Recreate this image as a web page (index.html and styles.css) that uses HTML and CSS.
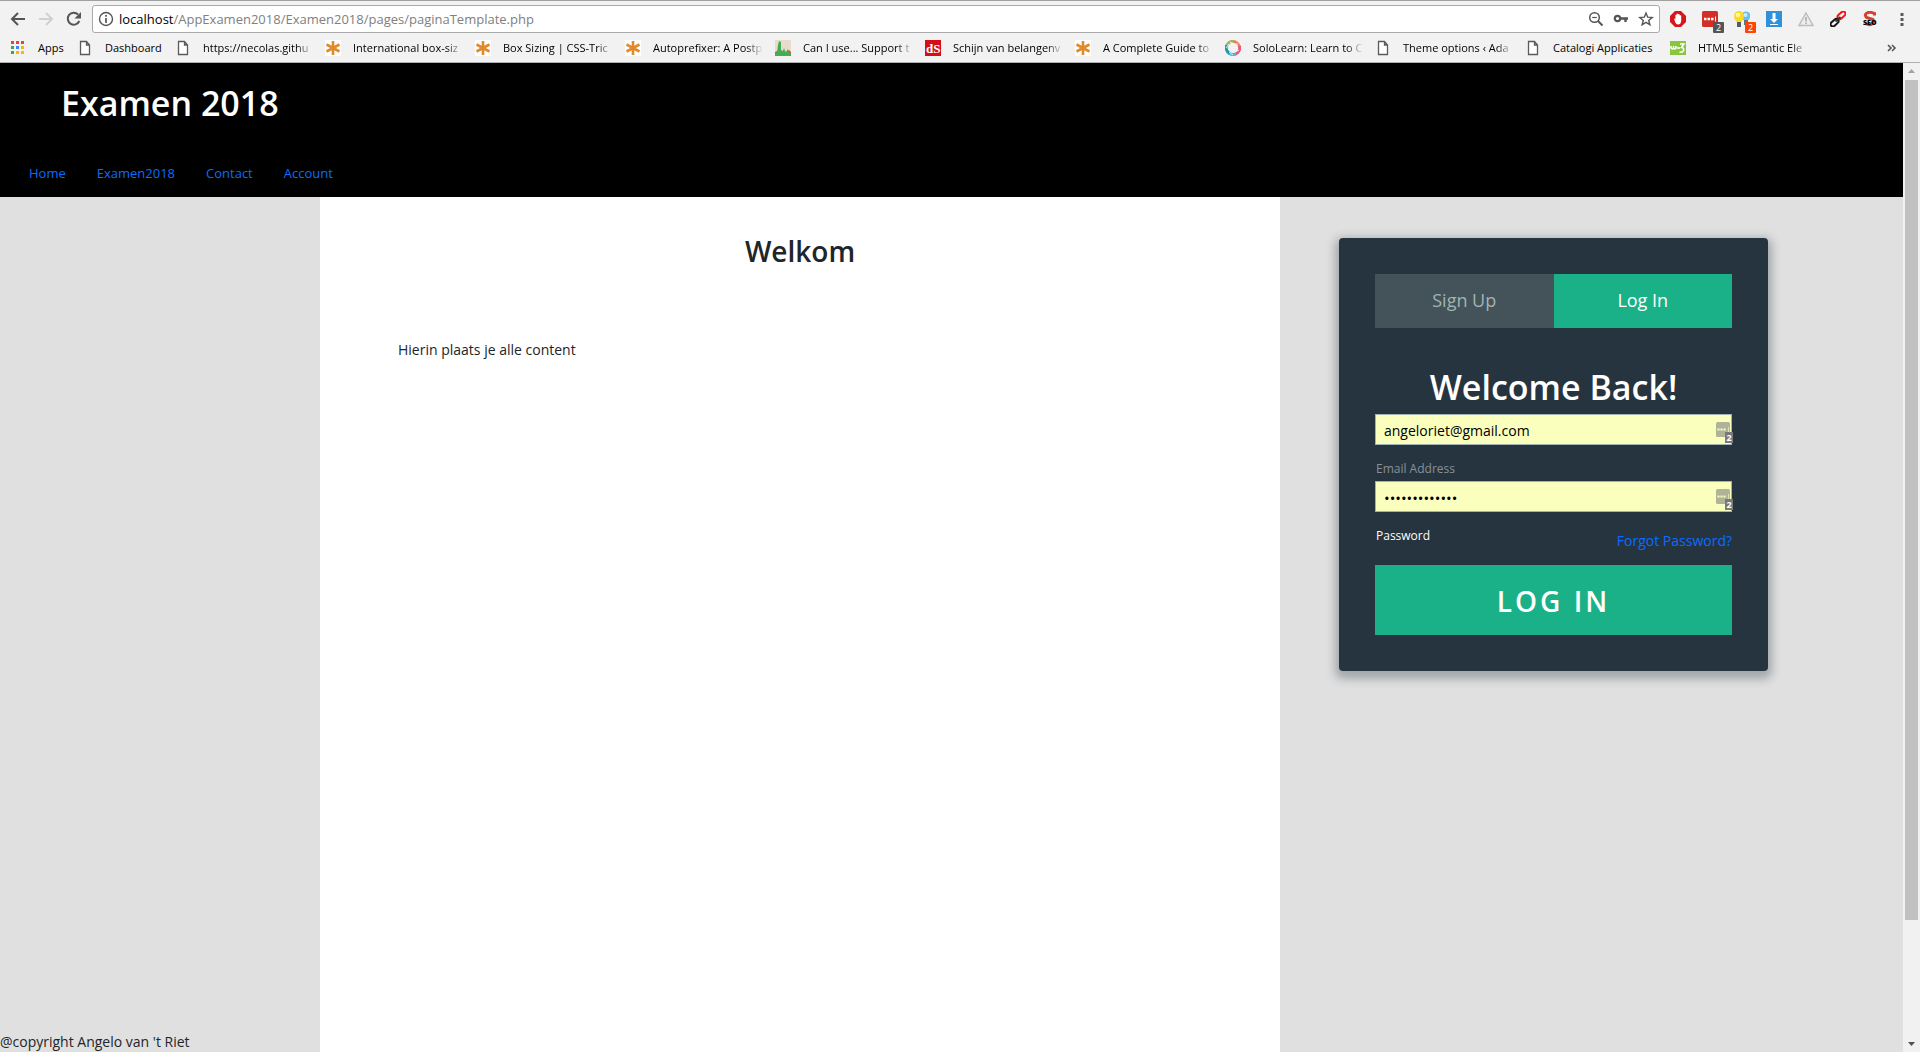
FILE: index.html
```html
<!DOCTYPE html>
<html lang="nl">
<head>
<meta charset="utf-8">
<title>Examen 2018</title>
<link rel="stylesheet" href="styles.css">
</head>
<body>
<svg class="sprite" aria-hidden="true">
  <symbol id="file" viewBox="0 0 16 16"><path d="M3.500 1.500h6l3 3.500v9.500h-9zM9.500 1.500v3.500h3" fill="#fff" stroke="#5a5a5a" stroke-width="1.300"/></symbol>
  <symbol id="star" viewBox="0 0 16 16"><path fill="#fff" d="M0 0h16v16H0z"/><path d="M8 1v14M1.500 4.500l13 7M14.500 4.500l-13 7" stroke="#e08a2c" stroke-width="2.600"/></symbol>
  <symbol id="lastpass" viewBox="0 0 14 15"><rect width="14" height="15" rx="1.500" fill="#b1b398"/><path d="M1.500 7.500h2m1 0h2m1 0h2" stroke="#fcffc5" stroke-width="2.200"/><path d="M12.500 5v5" stroke="#dfe2b4"/></symbol>
</svg>

<header class="browser">
  <div class="toolbar">
    <div class="nav-buttons">
      <button class="icon-button" aria-label="Back"><svg viewBox="0 0 16 16"><path d="M15 8H2.500M8 2L2 8l6 6" fill="none" stroke="#555" stroke-width="2"/></svg></button>
      <button class="icon-button" aria-label="Forward"><svg viewBox="0 0 16 16"><path d="M1 8h12.500M8 2l6 6-6 6" fill="none" stroke="#d0d0d0" stroke-width="2"/></svg></button>
      <button class="icon-button" aria-label="Reload"><svg viewBox="0 0 16 16"><path d="M13.300 10a6 6 0 1 1-1.200-6.500" fill="none" stroke="#555" stroke-width="2"/><path d="M15 1v6.500H8.500z" fill="#555"/></svg></button>
    </div>
    <div class="address">
      <svg class="icon" viewBox="0 0 16 16"><circle cx="8" cy="8" r="6.500" fill="none" stroke="#555" stroke-width="1.400"/><path d="M8 7v5M8 4v1.800" stroke="#555" stroke-width="1.700"/></svg>
      <span class="url"><span class="host">localhost</span>/AppExamen2018/Examen2018/pages/paginaTemplate.php</span>
      <div class="address-actions">
        <svg class="icon" viewBox="0 0 16 16"><circle cx="6.500" cy="6.500" r="4.800" fill="none" stroke="#555" stroke-width="1.500"/><path d="M10 10l4.500 4.500" stroke="#555" stroke-width="2"/><path d="M4.200 6.500h4.600" stroke="#555" stroke-width="1.200"/></svg>
        <svg class="icon" viewBox="0 0 16 16"><circle cx="4.500" cy="7.500" r="2.700" fill="none" stroke="#555" stroke-width="2.200"/><path d="M7.500 7.500H15M12.500 8v3" stroke="#555" stroke-width="2.400"/></svg>
        <svg class="icon" viewBox="0 0 16 16"><path d="M8 2l1.700 4.200 4.500.3-3.500 2.900 1.200 4.400L8 11.400l-3.900 2.400 1.200-4.400-3.500-2.900 4.500-.3z" fill="none" stroke="#555" stroke-width="1.400"/></svg>
      </div>
    </div>
    <div class="extensions">
      <svg class="icon" viewBox="0 0 16 16"><path d="M5 0h6l5 5v6l-5 5H5l-5-5V5z" fill="#d8141c"/><path d="M4 7.500l1.400.5V4q.8-1 1.300 0V3q.8-1 1.500 0v.5q.8-.8 1.500 0v1q.9-.7 1.500 0V10q-.5 3.500-3 3.500T5 10.800z" fill="#fff"/></svg>
      <span class="extension"><svg class="icon" viewBox="0 0 16 16"><rect width="16" height="16" rx="1.500" fill="#d32d27"/><path d="M2 8h2.500m1 0H8m1 0h2.500" stroke="#fff" stroke-width="2.500"/><path d="M13.500 5.500v5" stroke="#fff"/></svg><span class="badge">2</span></span>
      <span class="extension"><svg class="icon" viewBox="0 0 16 16"><circle cx="12" cy="5" r="4.500" fill="#69bfe9"/><circle cx="11.500" cy="4" r="2" fill="#c6edfb"/><path d="M10 9h4v5h-4z" fill="#65737c"/><path d="M0 5a5 5 0 0 1 10 0q0 3-2.500 6h-5Q0 8 0 5z" fill="#ffd91b"/><circle cx="4" cy="4" r="2.300" fill="#fff9b0"/><path d="M3 11h4v5H3z" fill="#4f5d66"/></svg><span class="badge badge-orange">2</span></span>
      <svg class="icon" viewBox="0 0 16 16"><path fill="#2f91dc" d="M0 0h16v16H0z"/><path d="M6.500 2h3v6H12l-4 4-4-4h2.500zM4 13h8v1H4z" fill="#fff"/></svg>
      <svg class="icon" viewBox="0 0 16 16"><path d="M8 2l7 12.500H1z" fill="#eee" stroke="#bdbdbd" stroke-width="1.500"/><path d="M8 6v4.500M8 11.500V13" stroke="#aaa" stroke-width="1.600"/></svg>
      <svg class="icon" viewBox="0 0 16 16"><rect x="7" y="2" width="9" height="4.500" rx="2.200" transform="rotate(-42 11.500 4.200)" fill="none" stroke="#f01414" stroke-width="2"/><rect x="0" y="9.500" width="9" height="4.500" rx="2.200" transform="rotate(-42 4.500 11.700)" fill="none" stroke="#151515" stroke-width="2"/><path d="M5.500 10.500l5-4.500" stroke="#333" stroke-width="1.800"/></svg>
      <svg class="icon" viewBox="0 0 16 16"><path d="M12.500 4.500V2.500Q8 .500 5 2T4.500 6.500L11 8.500q1.500 3-1 4.500T3.500 12.500" fill="none" stroke="#d5402f" stroke-width="3"/><text x="1" y="14" font-size="7" font-weight="800">SEO</text></svg>
      <button class="icon-button" aria-label="Menu"><svg viewBox="0 0 16 16"><path d="M6.500 2h3v3h-3zm0 5h3v3h-3zm0 5h3v3h-3z" fill="#5a5a5a"/></svg></button>
    </div>
  </div>
  <nav class="bookmarks" aria-label="Bookmarks">
    <a class="bookmark bookmark-short" href="#"><svg class="icon" viewBox="0 0 16 16"><path d="M1 1h3v3H1zm5 0h3v3H6zm5 0h3v3h-3z" fill="#ea4335"/><path d="M1 6h3v3H1zM1 11h3v3H1z" fill="#34a853"/><path d="M6 6h3v3H6z" fill="#4285f4"/><path d="M11 6h3v3h-3zM6 11h3v3H6zm5 0h3v3h-3z" fill="#f9b50b"/></svg><span class="bookmark-label">Apps</span></a>
    <a class="bookmark bookmark-medium" href="#"><svg class="icon"><use href="#file"/></svg><span class="bookmark-label">Dashboard</span></a>
    <a class="bookmark bookmark-long" href="#"><svg class="icon"><use href="#file"/></svg><span class="bookmark-label">https://necolas.githu</span></a>
    <a class="bookmark bookmark-long" href="#"><svg class="icon"><use href="#star"/></svg><span class="bookmark-label">International box-siz</span></a>
    <a class="bookmark bookmark-long" href="#"><svg class="icon"><use href="#star"/></svg><span class="bookmark-label">Box Sizing | CSS-Tric</span></a>
    <a class="bookmark bookmark-long" href="#"><svg class="icon"><use href="#star"/></svg><span class="bookmark-label">Autoprefixer: A Postp</span></a>
    <a class="bookmark bookmark-long" href="#"><svg class="icon" viewBox="0 0 16 16"><path fill="#e8dccb" d="M0 0h16v16H0z"/><path fill="#d9534a" d="M0 12l4-2 6 3 4-3 2 2v2H0z"/><path fill="#42ad55" d="M0 16v-3l2-1 1-7 1-4 2 1v8l2 1 1-3 1 3 1 1 2-3 1 4h2v3z"/></svg><span class="bookmark-label">Can I use... Support t</span></a>
    <a class="bookmark bookmark-long" href="#"><svg class="icon" viewBox="0 0 16 16"><path fill="#d40f18" d="M0 0h16v16H0z"/><text class="serif-mark" x="1" y="13" font-size="13" font-weight="700" fill="#fff">dS</text></svg><span class="bookmark-label">Schijn van belangenv</span></a>
    <a class="bookmark bookmark-long" href="#"><svg class="icon"><use href="#star"/></svg><span class="bookmark-label">A Complete Guide to</span></a>
    <a class="bookmark bookmark-long" href="#"><svg class="icon" viewBox="0 0 16 16"><g fill="none" stroke-width="3"><path d="M2 5a6.500 6.500 0 0 1 7-3.500" stroke="#9cb85b"/><path d="M8 1.500A6.500 6.500 0 0 1 14.300 7" stroke="#ef8354"/><path d="M14.400 6a6.500 6.500 0 0 1-4 8" stroke="#e9587b"/><path d="M11 13.800a6.500 6.500 0 0 1-7-.8" stroke="#42b7e8"/><path d="M4.500 13.500A6.500 6.500 0 0 1 2 5" stroke="#2199a0"/></g><path d="M5 2l4 2m3-1l0 5m2 2l-4 2m-2 3l-4-3M1 8l3-4" stroke="#fff" stroke-width=".8"/></svg><span class="bookmark-label">SoloLearn: Learn to C</span></a>
    <a class="bookmark bookmark-long" href="#"><svg class="icon"><use href="#file"/></svg><span class="bookmark-label">Theme options ‹ Ada</span></a>
    <a class="bookmark bookmark-wide" href="#"><svg class="icon"><use href="#file"/></svg><span class="bookmark-label">Catalogi Applicaties</span></a>
    <a class="bookmark bookmark-long" href="#"><svg class="icon" viewBox="0 0 16 16"><path fill="#8ac53f" d="M0 1h16v14H0z"/><path d="M1 6v2q1.500 2 2.500 0V6v2q1.500 2 2.500 0V6M7 8h3M10 4h4l-2.500 3.500q3 .5 2 3T9.500 12" fill="none" stroke="#fff" stroke-width="1.600"/></svg><span class="bookmark-label">HTML5 Semantic Ele</span></a>
    <button class="more" aria-label="More bookmarks"><svg class="icon" viewBox="0 0 16 16"><path d="M4 5l3 3-3 3M8 5l3 3-3 3" fill="none" stroke="#555" stroke-width="1.600"/></svg></button>
  </nav>
</header>

<div class="viewport">
  <div class="page">
    <header class="site-header">
      <h1 class="site-title">Examen 2018</h1>
      <nav class="site-nav"><a href="#">Home</a><a href="#">Examen2018</a><a href="#">Contact</a><a href="#">Account</a></nav>
    </header>
    <div class="columns">
      <footer class="left">@copyright Angelo van 't Riet</footer>
      <main class="content">
        <h2 class="welcome">Welkom</h2>
        <p class="intro">Hierin plaats je alle content</p>
      </main>
      <aside class="right">
        <form class="card">
          <div class="tabs"><a class="tab" href="#">Sign Up</a><a class="tab tab-active" href="#">Log In</a></div>
          <h2 class="card-title">Welcome Back!</h2>
          <div class="field">
            <div class="input-wrap"><input class="input" id="email" type="email" value="angeloriet@gmail.com"><svg class="fill-icon"><use href="#lastpass"/></svg><span class="fill-count">2</span></div>
            <label class="label" for="email">Email Address</label>
          </div>
          <div class="field">
            <div class="input-wrap"><input class="input input-password" id="password" type="password" value="wachtwoord123"><svg class="fill-icon"><use href="#lastpass"/></svg><span class="fill-count">2</span></div>
            <div class="field-foot"><label class="label label-active" for="password">Password</label><a class="forgot" href="#">Forgot Password?</a></div>
          </div>
          <button class="submit" type="button">LOG IN</button>
        </form>
      </aside>
    </div>
  </div>
  <div class="scrollbar" aria-hidden="true">
    <svg class="arrow" viewBox="0 0 17 17"><path d="M5 10l3.500-4 3.500 4z" fill="#a3a3a3"/></svg>
    <div class="track"><div class="thumb"></div></div>
    <svg class="arrow" viewBox="0 0 17 17"><path d="M5 7l3.500 4L12 7z" fill="#505050"/></svg>
  </div>
</div>
</body>
</html>
```

FILE: styles.css
```css
* { box-sizing: border-box; }
body {
  margin: 0;
  min-height: 100vh;
  display: flex;
  flex-direction: column;
  font: 14px/22px "Open Sans", "Noto Sans", sans-serif;
  color: #212529;
  background: #e0e0e0;
}
a { color: #0a6cff; text-decoration: none; }
button { border: 0; padding: 0; background: none; font: inherit; }
h1, h2, p { margin: 0; }
.sprite { position: absolute; width: 0; height: 0; }
.icon { flex: none; display: block; width: 16px; height: 16px; }

/* Browser bars */
.browser { background: #f2f2f2; border-top: 1px solid #a0a0a0; border-bottom: 1px solid #b0b0b0; height: 63px; }
.toolbar { display: flex; align-items: center; padding: 4px 10px 0 10px; }
.nav-buttons { display: flex; gap: 12px; width: 82px; }
.icon-button { width: 16px; height: 16px; }
.icon-button svg { display: block; width: 16px; height: 16px; }
.address { flex: 1; display: flex; align-items: center; gap: 5px; height: 28px; padding: 0 5px; background: #fff; border: 1px solid #a9a9a9; border-radius: 3px; }
.url { flex: 1; color: #808080; font-size: 13px; line-height: 20px; }
.host { color: #000; }
.address-actions { display: flex; gap: 9px; }
.extensions { display: flex; gap: 16px; padding-left: 10px; }
.extension { position: relative; }
.badge { position: absolute; left: 11px; top: 11px; width: 11px; height: 11px; border-radius: 1px; background: #555; color: #fff; font-size: 9px; line-height: 11px; text-align: center; }
.badge-orange { background: #ff4500; }
.bookmarks { display: flex; align-items: center; gap: 12px; height: 30px; padding: 0 20px 0 10px; }
.bookmark { display: flex; align-items: center; gap: 12px; color: #000; font-size: 11px; line-height: 16px; }
.bookmark-label { white-space: nowrap; }
.bookmark-short .bookmark-label { width: 27px; }
.bookmark-medium .bookmark-label { width: 58px; }
.bookmark-wide .bookmark-label { width: 105px; }
.bookmark-long .bookmark-label { width: 110px; -webkit-mask-image: linear-gradient(90deg, #000 85%, transparent); mask-image: linear-gradient(90deg, #000 85%, transparent); }
.more { margin-left: auto; }
.serif-mark { font-family: "Liberation Serif", serif; }

/* Page and its scroll bar */
.viewport { flex: 1; display: flex; }
.page { flex: 1; display: flex; flex-direction: column; }
.scrollbar { width: 17px; display: flex; flex-direction: column; background: #f1f1f1; }
.arrow { display: block; width: 17px; height: 17px; }
.track { flex: 1; padding: 0 2px; }
.thumb { height: 88%; background: #c1c1c1; }

.site-header { background: #000; padding: 18px 29px 13px; }
.site-title { padding-left: 32px; color: #fff; font-size: 34px; font-weight: 600; line-height: 44px; }
.site-nav { display: flex; gap: 31px; padding-top: 37px; font-size: 13px; }

.columns { flex: 1; display: grid; grid-template-columns: calc(100vw / 6) 50vw 1fr; }
.left { align-self: end; line-height: 20px; }
.content { background: #fff; padding: 36px 78px; }
.welcome { font-size: 28px; font-weight: 600; line-height: 36px; text-align: center; }
.intro { padding-top: 70px; }
.right { padding: 41px 135px 36px 59px; }

/* Login card */
.card { padding: 36px; background: #263440; border-radius: 4px; box-shadow: 0 4px 10px 4px rgba(19, 35, 47, .3); }
.tabs { display: flex; }
.tab { flex: 1; padding: 14px 0 16px; background: #435359; color: #a0b3b0; font-size: 18px; line-height: 24px; text-align: center; }
.tab-active { background: #1ab188; color: #fff; }
.card-title { padding: 37px 0 5px; color: #fff; font-size: 34px; font-weight: 600; line-height: 44px; text-align: center; }
.field { display: flex; flex-direction: column; }
.input-wrap { position: relative; }
.input { display: block; width: 100%; height: 31px; padding: 5px 8px 3px; border: 1px solid #a0b3b0; background: #faffbd; color: #000; font: inherit; }
.input-password { font-size: 15px; }
.fill-icon { position: absolute; right: 2px; top: 8px; width: 14px; height: 15px; }
.fill-count { position: absolute; right: -1px; top: 18px; width: 8px; height: 11px; background: #7a7a7a; color: #fff; font-size: 9px; font-weight: 700; line-height: 11px; text-align: center; }
.label { padding: 15px 1px 3px; color: #899197; font-size: 12px; line-height: 18px; }
.label-active { color: #fff; }
.field-foot { display: flex; justify-content: space-between; align-items: flex-start; }
.forgot { padding: 18px 0 13px; }
.submit { display: block; width: 100%; height: 70px; padding-top: 2px; background: #1ab188; color: #fff; font-size: 28px; font-weight: 600; letter-spacing: 3px; }
```
